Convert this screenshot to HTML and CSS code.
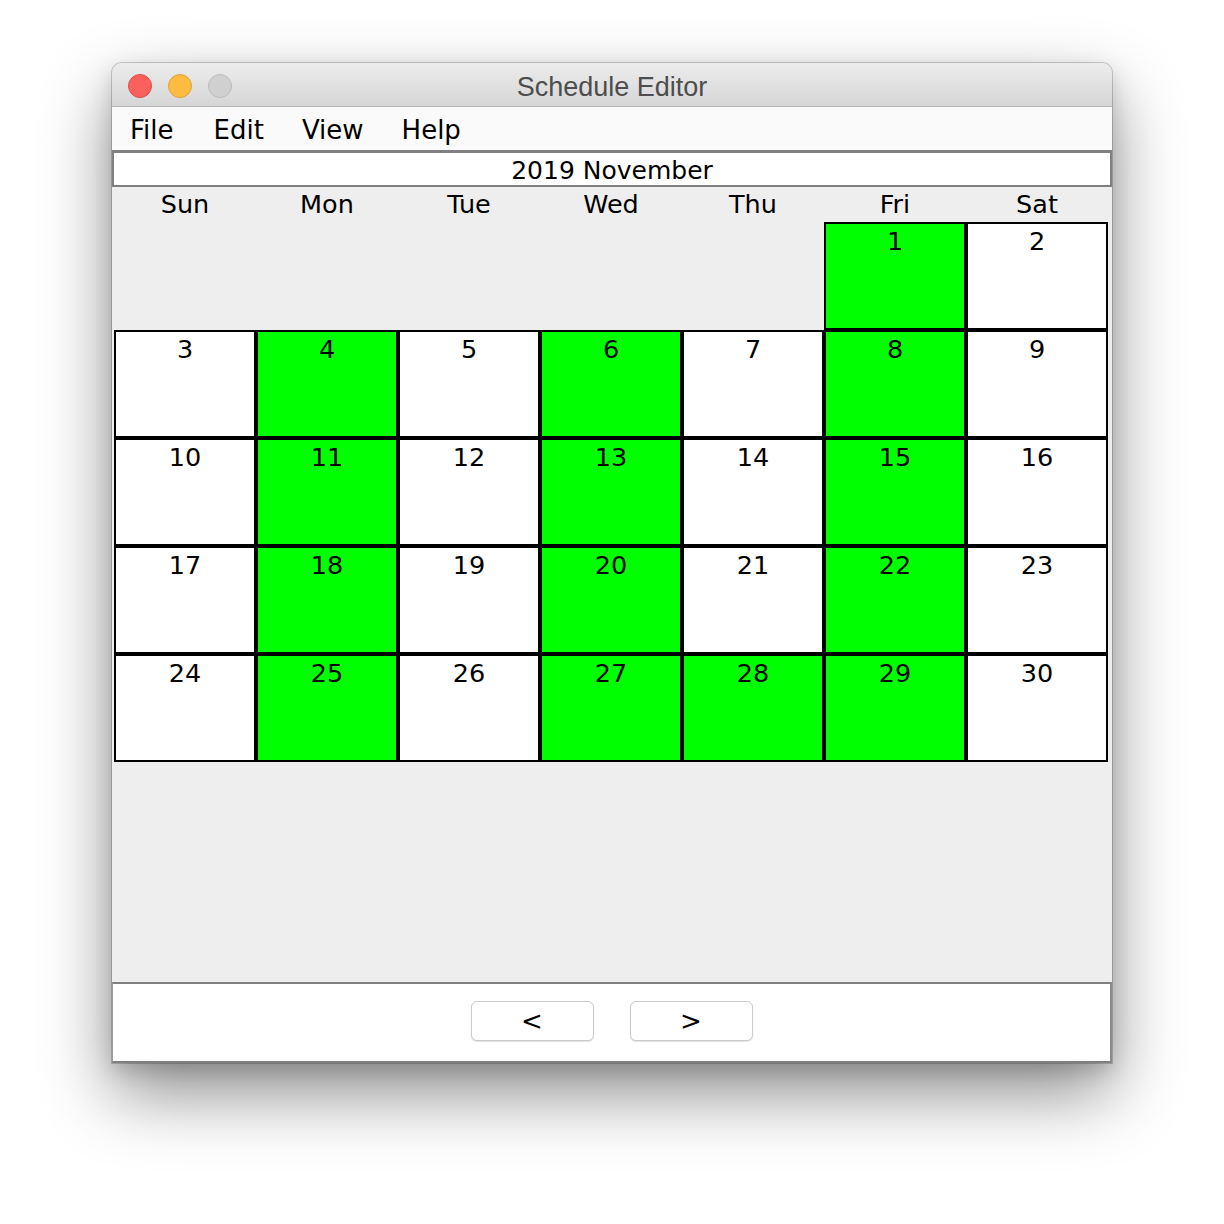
FILE: index.html
```html
<!DOCTYPE html>
<html>
<head>
<meta charset="utf-8">
<title>Schedule Editor</title>
<link rel="stylesheet" href="styles.css">
</head>
<body>
<div class="window">
  <div class="titlebar">
    <div class="lights">
      <span class="light red"></span>
      <span class="light yellow"></span>
      <span class="light gray"></span>
    </div>
    <div class="title">Schedule Editor</div>
  </div>
  <div class="menubar">
    <span class="menu first">File</span>
    <span class="menu">Edit</span>
    <span class="menu">View</span>
    <span class="menu">Help</span>
  </div>
  <div class="content">
    <div class="month">2019 November</div>
    <div class="weekdays">
      <span>Sun</span><span>Mon</span><span>Tue</span><span>Wed</span><span>Thu</span><span>Fri</span><span>Sat</span>
    </div>
    <div class="grid">
      <div class="blank"></div><div class="blank"></div><div class="blank"></div><div class="blank"></div><div class="blank"></div>
      <div class="day on">1</div><div class="day">2</div>
      <div class="day">3</div><div class="day on">4</div><div class="day">5</div><div class="day on">6</div><div class="day">7</div><div class="day on">8</div><div class="day">9</div>
      <div class="day">10</div><div class="day on">11</div><div class="day">12</div><div class="day on">13</div><div class="day">14</div><div class="day on">15</div><div class="day">16</div>
      <div class="day">17</div><div class="day on">18</div><div class="day">19</div><div class="day on">20</div><div class="day">21</div><div class="day on">22</div><div class="day">23</div>
      <div class="day">24</div><div class="day on">25</div><div class="day">26</div><div class="day on">27</div><div class="day on">28</div><div class="day on">29</div><div class="day">30</div>
    </div>
  </div>
  <div class="bottom">
    <button class="btn">&lt;</button>
    <button class="btn">&gt;</button>
  </div>
</div>
</body>
</html>
```

FILE: styles.css
```css
html, body {
  margin: 0;
  padding: 0;
  background: #ffffff;
}
body {
  width: 1224px;
  height: 1224px;
  overflow: hidden;
}
.window {
  margin: 63px 0 0 112px;
  width: 1000px;
  height: 1000px;
  display: flex;
  flex-direction: column;
  border-radius: 10px 10px 0 0;
  background: #eeeeee;
  box-shadow: 0 0 0 1px rgba(0,0,0,0.18), 0 30px 70px rgba(0,0,0,0.45), 0 8px 20px rgba(0,0,0,0.15);
  font-family: "DejaVu Sans", Verdana, sans-serif;
  font-size: 26px;
  color: #000;
}
.titlebar {
  height: 44px;
  box-sizing: border-box;
  border-bottom: 1px solid #b4b4b4;
  border-radius: 10px 10px 0 0;
  background: linear-gradient(#ececec, #d6d6d6);
  display: flex;
  align-items: center;
  position: relative;
}
.lights {
  display: flex;
  gap: 16px;
  padding-left: 16px;
  padding-top: 2px;
}
.light {
  width: 24px;
  height: 24px;
  box-sizing: border-box;
  border-radius: 50%;
  border: 1px solid;
}
.red { background: #fc605c; border-color: #de4b46; }
.yellow { background: #fdbc40; border-color: #dea034; }
.gray { background: #d0d0d0; border-color: #bcbcbc; }
.title {
  position: absolute;
  left: 0;
  right: 0;
  top: 9px;
  text-align: center;
  font-family: "Liberation Sans", Arial, sans-serif;
  font-size: 27px;
  color: #4d4d4d;
}
.menubar {
  height: 43px;
  background: #fafafa;
  display: flex;
  align-items: center;
}
.menu {
  padding: 2px 19px 0 19px;
}
.menu.first {
  padding-right: 21px;
  padding-left: 18px;
}
.content {
  flex: 1;
  background: #eeeeee;
  display: flex;
  flex-direction: column;
}
.month {
  height: 37px;
  box-sizing: border-box;
  border: 2px solid #808080;
  border-top-width: 3px;
  border-bottom-width: 2px;
  background: #ffffff;
  text-align: center;
  font-size: 25px;
  line-height: 32px;
  padding-top: 2px;
}
.weekdays {
  height: 35px;
  display: grid;
  grid-template-columns: repeat(7, 142px);
  padding-left: 2px;
  align-items: center;
  line-height: 35px;
  font-size: 25.5px;
}
.weekdays span {
  text-align: center;
}
.grid {
  display: grid;
  grid-template-columns: repeat(7, 142px);
  grid-auto-rows: 108px;
  margin-left: 2px;
}
.day {
  box-sizing: border-box;
  border: 2px solid #000;
  background: #ffffff;
  text-align: center;
  padding-top: 2px;
  line-height: 30px;
  font-size: 25.5px;
}
.day.on {
  background: #00ff00;
}
.bottom {
  height: 81px;
  box-sizing: border-box;
  border-top: 2px solid #808080;
  border-bottom: 2px solid #808080;
  border-left: 1px solid #9a9a9a;
  border-right: 2px solid #8a8a8a;
  background: #ffffff;
  display: flex;
  justify-content: center;
  align-items: flex-start;
  gap: 36px;
  padding-top: 17px;
}
.btn {
  width: 123px;
  height: 40px;
  box-sizing: border-box;
  border: 1px solid #cacaca;
  border-radius: 6px;
  background: #ffffff;
  box-shadow: 0 1px 1px rgba(0,0,0,0.12);
  font-family: "DejaVu Sans", Verdana, sans-serif;
  font-size: 26px;
  color: #000;
  padding: 0;
  line-height: 37px;
}
```
